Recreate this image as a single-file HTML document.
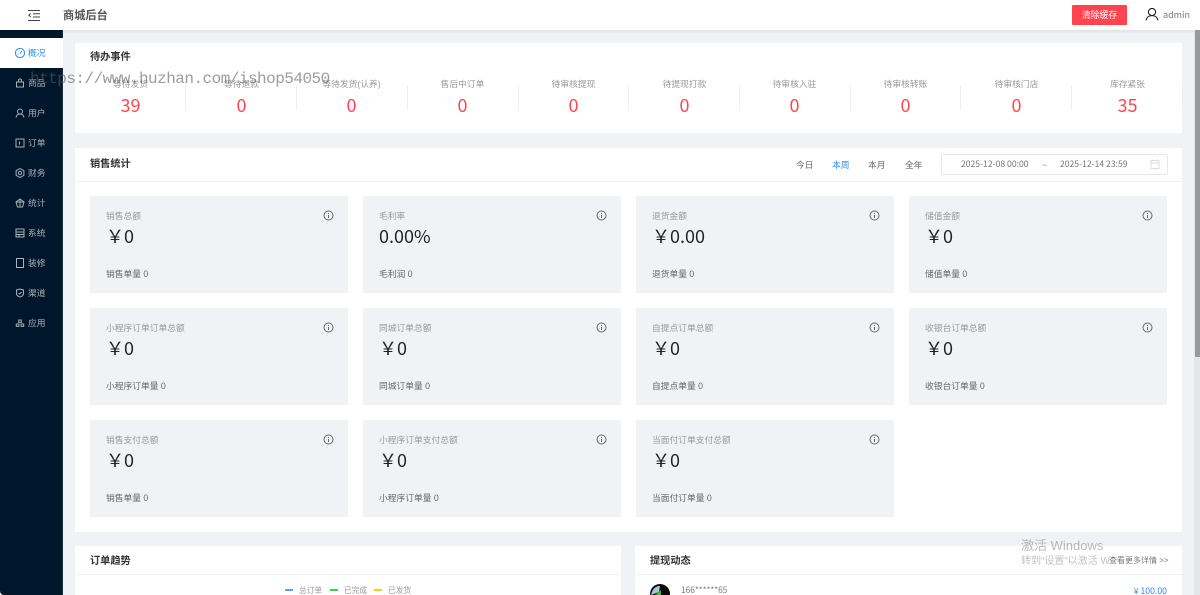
<!DOCTYPE html>
<html lang="zh-CN"><head><meta charset="utf-8"><title>商城后台</title>
<style>
*{box-sizing:border-box;margin:0;padding:0}
html,body{width:1200px;height:595px;overflow:hidden;background:#f0f2f5;font-family:"Liberation Sans","Noto Sans CJK SC",sans-serif}
#w{position:absolute;left:0;top:0;width:1200px;height:595px;overflow:hidden;filter:blur(.3px)}
.a{position:absolute;white-space:nowrap}
.n{font-family:"Noto Sans CJK SC","Liberation Sans",sans-serif}
.card{position:absolute;background:#fff}
.hr{position:absolute;height:1px;background:#f0f1f3}
.t{position:absolute;font-size:10.2px;line-height:16px;font-weight:700;color:#333;white-space:nowrap}
.nav{position:absolute;left:0;width:63px;height:30px;color:#a8b0b8;font-size:8.75px;line-height:31px}
.nav span{position:absolute;left:28px;top:0}
.nav svg{position:absolute;left:15px;top:10px;width:10px;height:10px;fill:none;stroke:#a8b0b8;stroke-width:1}
.ev{position:absolute;top:76px;width:111px;text-align:center}
.ev b{display:block;font-weight:400;font-size:8.75px;line-height:16px;color:#999}
.ev i{display:block;font-style:normal;font-family:"Noto Sans CJK SC","Liberation Sans",sans-serif;font-size:18px;line-height:24px;color:#ff444f;margin-top:1px}
.sep{position:absolute;top:85px;width:1px;height:25px;background:#eee}
.st{position:absolute;width:258px;height:97px;background:#f0f2f5;border-radius:2px}
.st .l{position:absolute;left:16px;top:13px;font-size:8.75px;line-height:15px;color:#999;white-space:nowrap}
.st .v{position:absolute;left:16px;top:27px;font-family:"Noto Sans CJK SC","Liberation Sans",sans-serif;font-size:18px;line-height:26px;color:#222;white-space:nowrap}
.st .s{position:absolute;left:16px;top:71px;font-size:8.75px;line-height:15px;color:#666;white-space:nowrap}
.st svg{position:absolute;left:233px;top:14px;width:11px;height:11px;fill:none;stroke:#666;stroke-width:1}
</style></head><body><div id="w">

<div class="a" style="left:0;top:30px;width:63px;height:565px;background:#00162b;border-right:1px solid #1d2d3d;border-bottom-left-radius:4px"></div>
<div class="a" style="left:0;top:38px;width:63px;height:30px;background:#fff"></div>

<div class="nav" style="top:38px;color:#2d8cf0"><svg viewBox="1 1 10 10" style="stroke:#2d8cf0"><circle cx="6" cy="6" r="4.600"/><path d="M6 6.500 8 4M3.500 7h1"/></svg><span>概况</span></div>
<div class="nav" style="top:68px"><svg viewBox="1 1 10 10"><path d="M2.500 5h7v5h-7zM4.500 5V3.500a1.500 1.500 0 0 1 3 0V5"/></svg><span>商品</span></div>
<div class="nav" style="top:98px"><svg viewBox="1 1 10 10"><circle cx="6" cy="4.500" r="2.500"/><path d="M2 10.500c.5-2.500 2-3.500 4-3.500s3.500 1 4 3.500"/></svg><span>用户</span></div>
<div class="nav" style="top:128px"><svg viewBox="1 1 10 10"><rect x="2" y="2" width="8" height="8"/><path d="M5.500 4.500v3"/></svg><span>订单</span></div>
<div class="nav" style="top:158px"><svg viewBox="1 1 10 10"><path d="M6 1.500 9.900 3.700v4.600L6 10.500 2.100 8.300V3.700z"/><circle cx="6" cy="6" r="1.600"/></svg><span>财务</span></div>
<div class="nav" style="top:188px"><svg viewBox="1 1 10 10"><path d="M6 2 10 5 8.500 10h-5L2 5z"/><path d="M2 5h8M6 2v8"/></svg><span>统计</span></div>
<div class="nav" style="top:218px"><svg viewBox="1 1 10 10"><rect x="2" y="2" width="8" height="8"/><path d="M2 5h8M2 7.500h8M5 7.500V10"/></svg><span>系统</span></div>
<div class="nav" style="top:248px"><svg viewBox="1 1 10 10"><rect x="2.500" y="1.500" width="7" height="9"/></svg><span>装修</span></div>
<div class="nav" style="top:278px"><svg viewBox="1 1 10 10"><path d="M6 2 9.500 3v3.500c0 2-2 3-3.500 3.500-1.500-.5-3.500-1.500-3.500-3.500V3z"/><path d="M4.500 6 5.700 7l2-2"/></svg><span>渠道</span></div>
<div class="nav" style="top:308px"><svg viewBox="1 1 10 10"><rect x="4.700" y="3" width="2.600" height="2.400"/><rect x="2.300" y="7" width="2.600" height="2.400"/><rect x="7.100" y="7" width="2.600" height="2.400"/></svg><span>应用</span></div>

<div class="a" style="left:0;top:0;width:1200px;height:30px;background:#fff;box-shadow:0 1px 4px rgba(0,21,41,.1)"></div>
<svg class="a" style="left:28px;top:10px" width="13" height="11" viewBox="0 0 13 11" fill="none" stroke="#444" stroke-width="1"><path d="M0 .5h12M5 3.800h7M5 7h7M0 10.500h12M2.800 3.500 .8 5.200l2 1.700"/></svg>
<div class="a" style="left:63px;top:8px;font-size:11.200px;line-height:16px;font-weight:700;color:#555">商城后台</div>
<div class="a" style="left:1072px;top:5px;width:55px;height:20px;background:#ff444f;border-radius:1px;color:#fff;font-size:8.900px;line-height:20px;text-align:center">清除缓存</div>
<svg class="a" style="left:1145px;top:7px" width="14" height="14" viewBox="0 0 14 14" fill="none" stroke="#222" stroke-width="1.100"><circle cx="7" cy="5" r="3.600"/><path d="M1 13.300c.6-3 3-4.700 6-4.700s5.400 1.700 6 4.700"/></svg>
<div class="a n" style="left:1163px;top:8px;font-size:9px;line-height:14px;color:#777">admin</div>

<div class="a" style="left:1194px;top:30px;width:6px;height:565px;background:#e4e6e8"></div>
<div class="a" style="left:1195px;top:30px;width:5px;height:327px;background:#9a9a9a"></div>

<div class="card" style="left:75px;top:43px;width:1107px;height:90px"></div>
<div class="t" style="left:90px;top:50px">待办事件</div>
<div class="ev" style="left:75px"><b>等待发货</b><i>39</i></div>
<div class="ev" style="left:186px"><b>等待退款</b><i>0</i></div>
<div class="ev" style="left:296px"><b>等待发货(认养)</b><i>0</i></div>
<div class="ev" style="left:407px"><b>售后中订单</b><i>0</i></div>
<div class="ev" style="left:518px"><b>待审核提现</b><i>0</i></div>
<div class="ev" style="left:629px"><b>待提现打款</b><i>0</i></div>
<div class="ev" style="left:739px"><b>待审核入驻</b><i>0</i></div>
<div class="ev" style="left:850px"><b>待审核转账</b><i>0</i></div>
<div class="ev" style="left:961px"><b>待审核门店</b><i>0</i></div>
<div class="ev" style="left:1072px"><b>库存紧张</b><i>35</i></div>
<div class="sep" style="left:185px"></div><div class="sep" style="left:296px"></div><div class="sep" style="left:407px"></div><div class="sep" style="left:518px"></div><div class="sep" style="left:628px"></div><div class="sep" style="left:739px"></div><div class="sep" style="left:850px"></div><div class="sep" style="left:960px"></div><div class="sep" style="left:1071px"></div><div class="sep" style="left:1182px"></div>

<div class="a" style="left:30px;top:69px;font-family:'Liberation Mono',monospace;font-size:16px;line-height:20px;color:rgba(90,90,90,.6);letter-spacing:-.52px">https://www.huzhan.com/ishop54050</div>

<div class="card" style="left:75px;top:148px;width:1107px;height:384px"></div>
<div class="hr" style="left:75px;top:181px;width:1107px"></div>
<div class="t" style="left:90px;top:157px">销售统计</div>
<div class="a" style="left:796px;top:157px;font-size:8.750px;line-height:16px;color:#666">今日</div>
<div class="a" style="left:832px;top:157px;font-size:8.750px;line-height:16px;color:#2d8cf0">本周</div>
<div class="a" style="left:868px;top:157px;font-size:8.750px;line-height:16px;color:#666">本月</div>
<div class="a" style="left:905px;top:157px;font-size:8.750px;line-height:16px;color:#666">全年</div>
<div class="a" style="left:941px;top:154px;width:227px;height:21px;border:1px solid #e6e8eb;border-radius:2px"></div>
<div class="a n" style="left:961px;top:156px;font-size:8.600px;line-height:16px;color:#777">2025-12-08 00:00</div>
<div class="a" style="left:1042px;top:157px;font-size:9px;line-height:16px;color:#888">~</div>
<div class="a n" style="left:1060px;top:156px;font-size:8.600px;line-height:16px;color:#777">2025-12-14 23:59</div>
<svg class="a" style="left:1150px;top:159px" width="10" height="10" viewBox="0 0 10 10" fill="none" stroke="#ddd" stroke-width="1"><rect x="1" y="1.500" width="8" height="8"/><path d="M1 4h8M3 .5v2M7 .5v2"/></svg>

<div class="st" style="left:90px;top:196px"><div class="l">销售总额</div><div class="v">￥0</div><div class="s">销售单量 0</div><svg viewBox="0 0 11 11"><circle cx="5.500" cy="5.500" r="4.500"/><path d="M5.500 5v3M5.500 3v1"/></svg></div>
<div class="st" style="left:363px;top:196px"><div class="l">毛利率</div><div class="v">0.00%</div><div class="s">毛利润 0</div><svg viewBox="0 0 11 11"><circle cx="5.500" cy="5.500" r="4.500"/><path d="M5.500 5v3M5.500 3v1"/></svg></div>
<div class="st" style="left:636px;top:196px"><div class="l">退货金额</div><div class="v">￥0.00</div><div class="s">退货单量 0</div><svg viewBox="0 0 11 11"><circle cx="5.500" cy="5.500" r="4.500"/><path d="M5.500 5v3M5.500 3v1"/></svg></div>
<div class="st" style="left:909px;top:196px"><div class="l">储值金额</div><div class="v">￥0</div><div class="s">储值单量 0</div><svg viewBox="0 0 11 11"><circle cx="5.500" cy="5.500" r="4.500"/><path d="M5.500 5v3M5.500 3v1"/></svg></div>

<div class="st" style="left:90px;top:308px"><div class="l">小程序订单订单总额</div><div class="v">￥0</div><div class="s">小程序订单量 0</div><svg viewBox="0 0 11 11"><circle cx="5.500" cy="5.500" r="4.500"/><path d="M5.500 5v3M5.500 3v1"/></svg></div>
<div class="st" style="left:363px;top:308px"><div class="l">同城订单总额</div><div class="v">￥0</div><div class="s">同城订单量 0</div><svg viewBox="0 0 11 11"><circle cx="5.500" cy="5.500" r="4.500"/><path d="M5.500 5v3M5.500 3v1"/></svg></div>
<div class="st" style="left:636px;top:308px"><div class="l">自提点订单总额</div><div class="v">￥0</div><div class="s">自提点单量 0</div><svg viewBox="0 0 11 11"><circle cx="5.500" cy="5.500" r="4.500"/><path d="M5.500 5v3M5.500 3v1"/></svg></div>
<div class="st" style="left:909px;top:308px"><div class="l">收银台订单总额</div><div class="v">￥0</div><div class="s">收银台订单量 0</div><svg viewBox="0 0 11 11"><circle cx="5.500" cy="5.500" r="4.500"/><path d="M5.500 5v3M5.500 3v1"/></svg></div>

<div class="st" style="left:90px;top:420px"><div class="l">销售支付总额</div><div class="v">￥0</div><div class="s">销售单量 0</div><svg viewBox="0 0 11 11"><circle cx="5.500" cy="5.500" r="4.500"/><path d="M5.500 5v3M5.500 3v1"/></svg></div>
<div class="st" style="left:363px;top:420px"><div class="l">小程序订单支付总额</div><div class="v">￥0</div><div class="s">小程序订单量 0</div><svg viewBox="0 0 11 11"><circle cx="5.500" cy="5.500" r="4.500"/><path d="M5.500 5v3M5.500 3v1"/></svg></div>
<div class="st" style="left:636px;top:420px"><div class="l">当面付订单支付总额</div><div class="v">￥0</div><div class="s">当面付订单量 0</div><svg viewBox="0 0 11 11"><circle cx="5.500" cy="5.500" r="4.500"/><path d="M5.500 5v3M5.500 3v1"/></svg></div>

<div class="card" style="left:75px;top:546px;width:546px;height:49px"></div>
<div class="hr" style="left:75px;top:574px;width:546px"></div>
<div class="t" style="left:90px;top:554px">订单趋势</div>
<div class="a" style="left:285px;top:589px;width:8px;height:2px;background:#4da6ff"></div>
<div class="a" style="left:299px;top:583px;font-size:7.700px;line-height:15px;color:#999">总订单</div>
<div class="a" style="left:330px;top:589px;width:8px;height:2px;background:#34d058"></div>
<div class="a" style="left:344px;top:583px;font-size:7.700px;line-height:15px;color:#999">已完成</div>
<div class="a" style="left:374px;top:589px;width:8px;height:2px;background:#ffcc1a"></div>
<div class="a" style="left:388px;top:583px;font-size:7.700px;line-height:15px;color:#999">已发货</div>

<div class="card" style="left:635px;top:546px;width:547px;height:49px"></div>
<div class="hr" style="left:635px;top:574px;width:547px"></div>
<div class="t" style="left:650px;top:554px">提现动态</div>
<div class="a" style="left:1109px;top:553px;font-size:8px;line-height:15px;color:#777">查看更多详情 &gt;&gt;</div>
<svg class="a" style="left:650px;top:584px" width="20" height="11" viewBox="0 0 20 11"><circle cx="10" cy="10" r="10" fill="#0a0a0a"/><path d="M1 11 Q3 2 10 2 L9 8 Z" fill="#a9c4dc"/><path d="M5 11 L11 6 L11 11Z" fill="#5aa84a"/></svg>
<div class="a n" style="left:681px;top:583px;font-size:8.300px;line-height:15px;color:#777">166******65</div>
<div class="a n" style="right:33px;top:583px;font-size:8.700px;line-height:15px;color:#2d8cf0">¥ 100.00</div>

<div class="a" style="left:1021px;top:538px;font-size:13px;line-height:16px;color:rgba(120,120,120,.5)">激活 Windows</div>
<div class="a" style="left:1021px;top:555px;width:88px;overflow:hidden;font-size:10px;line-height:14px;color:rgba(120,120,120,.45)">转到“设置”以激活 Windows。</div>
</div></body></html>
